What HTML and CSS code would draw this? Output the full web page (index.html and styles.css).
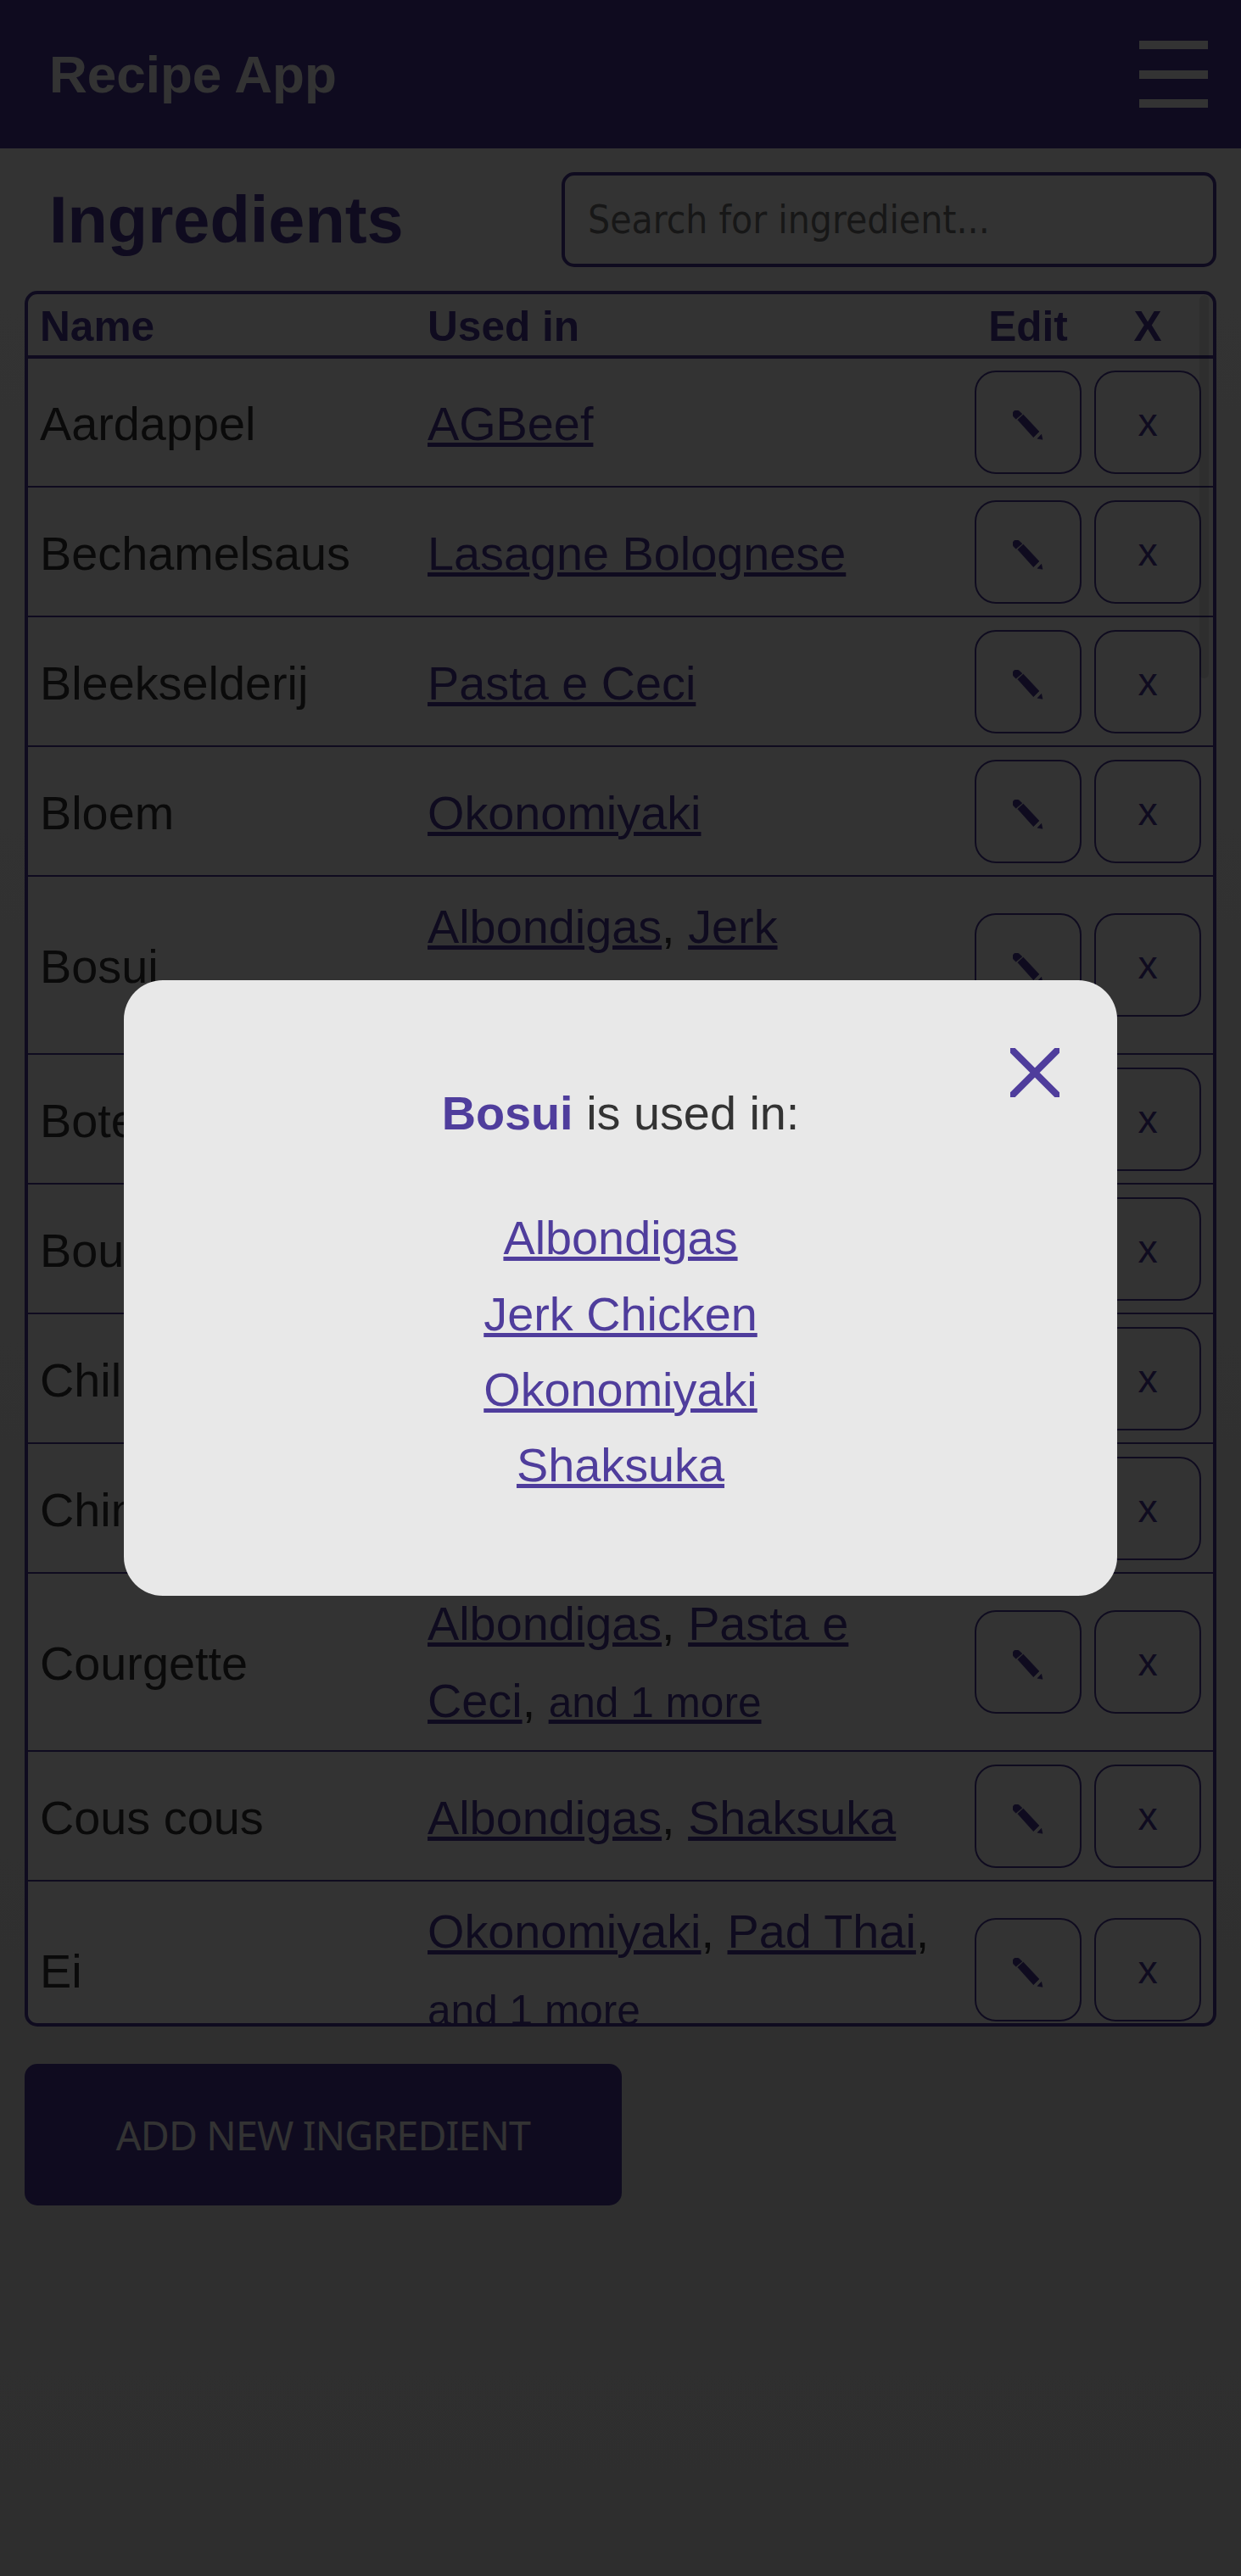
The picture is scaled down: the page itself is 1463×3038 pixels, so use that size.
FILE: index.html
```html
<!DOCTYPE html>
<html lang="en">

<head>
    <meta charset="UTF-8">
    <title>Recipe App</title>
    <link rel="stylesheet" href="styles.css">
</head>

<body>
    <header class="topbar">
        <a class="brand" href="#">Recipe App</a>
        <button class="burger" type="button" aria-label="Menu"><span></span><span></span><span></span></button>
    </header>

    <main class="content">
        <div class="title-row">
            <h1>Ingredients</h1>
            <input class="search" type="text" placeholder="Search for ingredient...">
        </div>

        <div class="table-wrap">
            <table class="ingredients">
                <thead>
                    <tr>
                        <th class="col-name">Name</th>
                        <th class="col-used">Used in</th>
                        <th class="col-edit">Edit</th>
                        <th class="col-x">X</th>
                    </tr>
                </thead>
                <tbody>
                    <tr>
                        <td>Aardappel</td>
                        <td><a href="#">AGBeef</a></td>
                        <td class="cell-btn"><button class="row-btn" type="button"><svg class="pencil" viewBox="0 0 36 36"><path d="M11 4.300L3.700 10.300 1 7.500A4.600 4.600 0 0 1 7.500 1zM12.300 5L31 25l-6.700 6.700L5.700 11zM29 33.300l6 1-1.300-6z"/></svg></button></td>
                        <td class="cell-btn"><button class="row-btn" type="button">x</button></td>
                    </tr>
                    <tr>
                        <td>Bechamelsaus</td>
                        <td><a href="#">Lasagne Bolognese</a></td>
                        <td class="cell-btn"><button class="row-btn" type="button"><svg class="pencil" viewBox="0 0 36 36"><path d="M11 4.300L3.700 10.300 1 7.500A4.600 4.600 0 0 1 7.500 1zM12.300 5L31 25l-6.700 6.700L5.700 11zM29 33.300l6 1-1.300-6z"/></svg></button></td>
                        <td class="cell-btn"><button class="row-btn" type="button">x</button></td>
                    </tr>
                    <tr>
                        <td>Bleekselderij</td>
                        <td><a href="#">Pasta e Ceci</a></td>
                        <td class="cell-btn"><button class="row-btn" type="button"><svg class="pencil" viewBox="0 0 36 36"><path d="M11 4.300L3.700 10.300 1 7.500A4.600 4.600 0 0 1 7.500 1zM12.300 5L31 25l-6.700 6.700L5.700 11zM29 33.300l6 1-1.300-6z"/></svg></button></td>
                        <td class="cell-btn"><button class="row-btn" type="button">x</button></td>
                    </tr>
                    <tr>
                        <td>Bloem</td>
                        <td><a href="#">Okonomiyaki</a></td>
                        <td class="cell-btn"><button class="row-btn" type="button"><svg class="pencil" viewBox="0 0 36 36"><path d="M11 4.300L3.700 10.300 1 7.500A4.600 4.600 0 0 1 7.500 1zM12.300 5L31 25l-6.700 6.700L5.700 11zM29 33.300l6 1-1.300-6z"/></svg></button></td>
                        <td class="cell-btn"><button class="row-btn" type="button">x</button></td>
                    </tr>
                    <tr>
                        <td>Bosui</td>
                        <td><a href="#">Albondigas</a>, <a href="#">Jerk Chicken</a>, <a class="more" href="#">and 2 more</a></td>
                        <td class="cell-btn"><button class="row-btn" type="button"><svg class="pencil" viewBox="0 0 36 36"><path d="M11 4.300L3.700 10.300 1 7.500A4.600 4.600 0 0 1 7.500 1zM12.300 5L31 25l-6.700 6.700L5.700 11zM29 33.300l6 1-1.300-6z"/></svg></button></td>
                        <td class="cell-btn"><button class="row-btn" type="button">x</button></td>
                    </tr>
                    <tr>
                        <td>Boter</td>
                        <td><a href="#">Jerk Chicken</a></td>
                        <td class="cell-btn"><button class="row-btn" type="button"><svg class="pencil" viewBox="0 0 36 36"><path d="M11 4.300L3.700 10.300 1 7.500A4.600 4.600 0 0 1 7.500 1zM12.300 5L31 25l-6.700 6.700L5.700 11zM29 33.300l6 1-1.300-6z"/></svg></button></td>
                        <td class="cell-btn"><button class="row-btn" type="button">x</button></td>
                    </tr>
                    <tr>
                        <td>Bouillon</td>
                        <td><a href="#">Pasta e Ceci</a></td>
                        <td class="cell-btn"><button class="row-btn" type="button"><svg class="pencil" viewBox="0 0 36 36"><path d="M11 4.300L3.700 10.300 1 7.500A4.600 4.600 0 0 1 7.500 1zM12.300 5L31 25l-6.700 6.700L5.700 11zM29 33.300l6 1-1.300-6z"/></svg></button></td>
                        <td class="cell-btn"><button class="row-btn" type="button">x</button></td>
                    </tr>
                    <tr>
                        <td>Chili</td>
                        <td><a href="#">Shaksuka</a></td>
                        <td class="cell-btn"><button class="row-btn" type="button"><svg class="pencil" viewBox="0 0 36 36"><path d="M11 4.300L3.700 10.300 1 7.500A4.600 4.600 0 0 1 7.500 1zM12.300 5L31 25l-6.700 6.700L5.700 11zM29 33.300l6 1-1.300-6z"/></svg></button></td>
                        <td class="cell-btn"><button class="row-btn" type="button">x</button></td>
                    </tr>
                    <tr>
                        <td>Chinese kool</td>
                        <td><a href="#">Okonomiyaki</a></td>
                        <td class="cell-btn"><button class="row-btn" type="button"><svg class="pencil" viewBox="0 0 36 36"><path d="M11 4.300L3.700 10.300 1 7.500A4.600 4.600 0 0 1 7.500 1zM12.300 5L31 25l-6.700 6.700L5.700 11zM29 33.300l6 1-1.300-6z"/></svg></button></td>
                        <td class="cell-btn"><button class="row-btn" type="button">x</button></td>
                    </tr>
                    <tr>
                        <td>Courgette</td>
                        <td><a href="#">Albondigas</a>, <a href="#">Pasta e Ceci</a>, <a class="more" href="#">and 1 more</a></td>
                        <td class="cell-btn"><button class="row-btn" type="button"><svg class="pencil" viewBox="0 0 36 36"><path d="M11 4.300L3.700 10.300 1 7.500A4.600 4.600 0 0 1 7.500 1zM12.300 5L31 25l-6.700 6.700L5.700 11zM29 33.300l6 1-1.300-6z"/></svg></button></td>
                        <td class="cell-btn"><button class="row-btn" type="button">x</button></td>
                    </tr>
                    <tr>
                        <td>Cous cous</td>
                        <td><a href="#">Albondigas</a>, <a href="#">Shaksuka</a></td>
                        <td class="cell-btn"><button class="row-btn" type="button"><svg class="pencil" viewBox="0 0 36 36"><path d="M11 4.300L3.700 10.300 1 7.500A4.600 4.600 0 0 1 7.500 1zM12.300 5L31 25l-6.700 6.700L5.700 11zM29 33.300l6 1-1.300-6z"/></svg></button></td>
                        <td class="cell-btn"><button class="row-btn" type="button">x</button></td>
                    </tr>
                    <tr>
                        <td>Ei</td>
                        <td><a href="#">Okonomiyaki</a>, <a href="#">Pad Thai</a>, <a class="more" href="#">and 1 more</a></td>
                        <td class="cell-btn"><button class="row-btn" type="button"><svg class="pencil" viewBox="0 0 36 36"><path d="M11 4.300L3.700 10.300 1 7.500A4.600 4.600 0 0 1 7.500 1zM12.300 5L31 25l-6.700 6.700L5.700 11zM29 33.300l6 1-1.300-6z"/></svg></button></td>
                        <td class="cell-btn"><button class="row-btn" type="button">x</button></td>
                    </tr>
                </tbody>
            </table>
            <div class="scroll-thumb"></div>
        </div>

        <button class="add-btn" type="button">ADD NEW INGREDIENT</button>
    </main>

    <div class="overlay">
        <div class="modal">
            <button class="modal-close" type="button" aria-label="Close">
                <svg viewBox="0 0 58 58"><path d="M-3 -3l64 64M61 -3L-3 61"/></svg>
            </button>
            <p class="modal-title"><strong>Bosui</strong> is used in:</p>
            <ul class="modal-list">
                <li><a href="#">Albondigas</a></li>
                <li><a href="#">Jerk Chicken</a></li>
                <li><a href="#">Okonomiyaki</a></li>
                <li><a href="#">Shaksuka</a></li>
            </ul>
        </div>
    </div>
</body>

</html>
```

FILE: styles.css
```css
* {
    margin: 0;
    padding: 0;
    box-sizing: border-box;
}

html,
body {
    height: 100%;
}

body {
    background: linear-gradient(#fff, #e6e6e6);
    color: #333;
    font-family: "Liberation Sans", Arial, sans-serif;
    font-size: 55.8px;
}

a {
    color: #4b3a9b;
    text-decoration-thickness: 4.500px;
}

.topbar {
    height: 175px;
    background: #4b3a9b;
    display: flex;
    align-items: center;
    justify-content: space-between;
    padding: 0 39px 0 58px;
}

.brand {
    color: #fff;
    font-size: 62px;
    font-weight: bold;
    text-decoration: none;
}

.burger {
    width: 81px;
    height: 79px;
    border: 0;
    background: none;
    display: flex;
    flex-direction: column;
    justify-content: space-between;
}

.burger span {
    display: block;
    height: 10px;
    background: #fff;
}

.content {
    padding: 28px 29px 0;
}

.title-row {
    display: flex;
    align-items: center;
    justify-content: space-between;
    height: 112px;
    padding-left: 29px;
}

h1 {
    font-size: 77.5px;
    color: #4b3a9b;
}

.search {
    width: 772px;
    height: 112px;
    border: 4px solid #4b3a9b;
    border-radius: 15px;
    padding: 0 27px;
    background: #fff;
    font-family: "DejaVu Sans Condensed", "DejaVu Sans", sans-serif;
    font-stretch: condensed;
    font-size: 45.8px;
    outline: 0;
}

.search::placeholder {
    color: #757575;
}

.table-wrap {
    position: relative;
    height: 2047px;
    margin-top: 28px;
    border: 4px solid #4b3a9b;
    border-radius: 15px;
    background: #fff;
    overflow: hidden;
}

.ingredients {
    width: 100%;
    border-collapse: collapse;
    table-layout: fixed;
}

.ingredients th {
    height: 74px;
    padding-top: 4px;
    color: #4b3a9b;
    font-size: 49.6px;
    text-align: left;
    border-bottom: 4px solid #4b3a9b;
}

.col-name {
    width: 471px;
    padding-left: 14px;
}

.col-used {
    width: 637px;
}

.ingredients th.col-edit {
    width: 141px;
    padding-left: 8px;
    padding-right: 7px;
    text-align: center;
}

.ingredients th.col-x {
    padding-left: 8px;
    padding-right: 14px;
    text-align: center;
}

.ingredients td {
    height: 153px;
    line-height: 91px;
    padding: 13px 14px 10px;
    border-bottom: 2px solid #4b3a9b;
    vertical-align: middle;
}

.ingredients td + td {
    padding-left: 0;
}

.ingredients .more {
    font-size: 49.6px;
}

.ingredients td.cell-btn {
    padding: 0 0 0 8px;
}

.row-btn {
    display: flex;
    align-items: center;
    justify-content: center;
    width: 126px;
    height: 122px;
    border: 2px solid #4b3a9b;
    border-radius: 25px;
    background: #fff;
    color: #4b3a9b;
    font-family: "Liberation Sans", Arial, sans-serif;
    font-size: 46.5px;
}

.pencil {
    width: 36px;
    height: 36px;
    margin-top: 8px;
    fill: #4b3a9b;
    stroke: #4b3a9b;
    stroke-width: 0.6;
}

.scroll-thumb {
    position: absolute;
    top: 1px;
    right: 5px;
    width: 11px;
    height: 452px;
    border-radius: 6px;
    background: rgba(0, 0, 0, 0.1);
}

.add-btn {
    display: block;
    width: 704px;
    height: 167px;
    margin-top: 44px;
    border: 0;
    border-radius: 15px;
    background: #4b3a9b;
    color: #fff;
    font-family: "Noto Sans", sans-serif;
    font-size: 46.5px;
    letter-spacing: -0.8px;
}

.overlay {
    position: fixed;
    inset: 0;
    background: rgba(0, 0, 0, 0.8);
    display: flex;
    align-items: center;
    justify-content: center;
}

.modal {
    position: relative;
    width: 1171px;
    height: 726px;
    padding: 112px 0 0;
    border-radius: 46px;
    background: #e8e8e8;
    color: #333;
    text-align: center;
    line-height: 89.3px;
}

.modal a {
    color: #4f3d9c;
}

.modal-title strong {
    color: #4f3d9c;
}

.modal-close {
    position: absolute;
    top: 80px;
    right: 68px;
    width: 58px;
    height: 58px;
    border: 0;
    background: none;
}

.modal-close svg {
    display: block;
    width: 58px;
    height: 58px;
    fill: none;
    stroke: #4f3d9c;
    stroke-width: 8;
}

.modal-list {
    list-style: none;
    margin-top: 58px;
}
```
